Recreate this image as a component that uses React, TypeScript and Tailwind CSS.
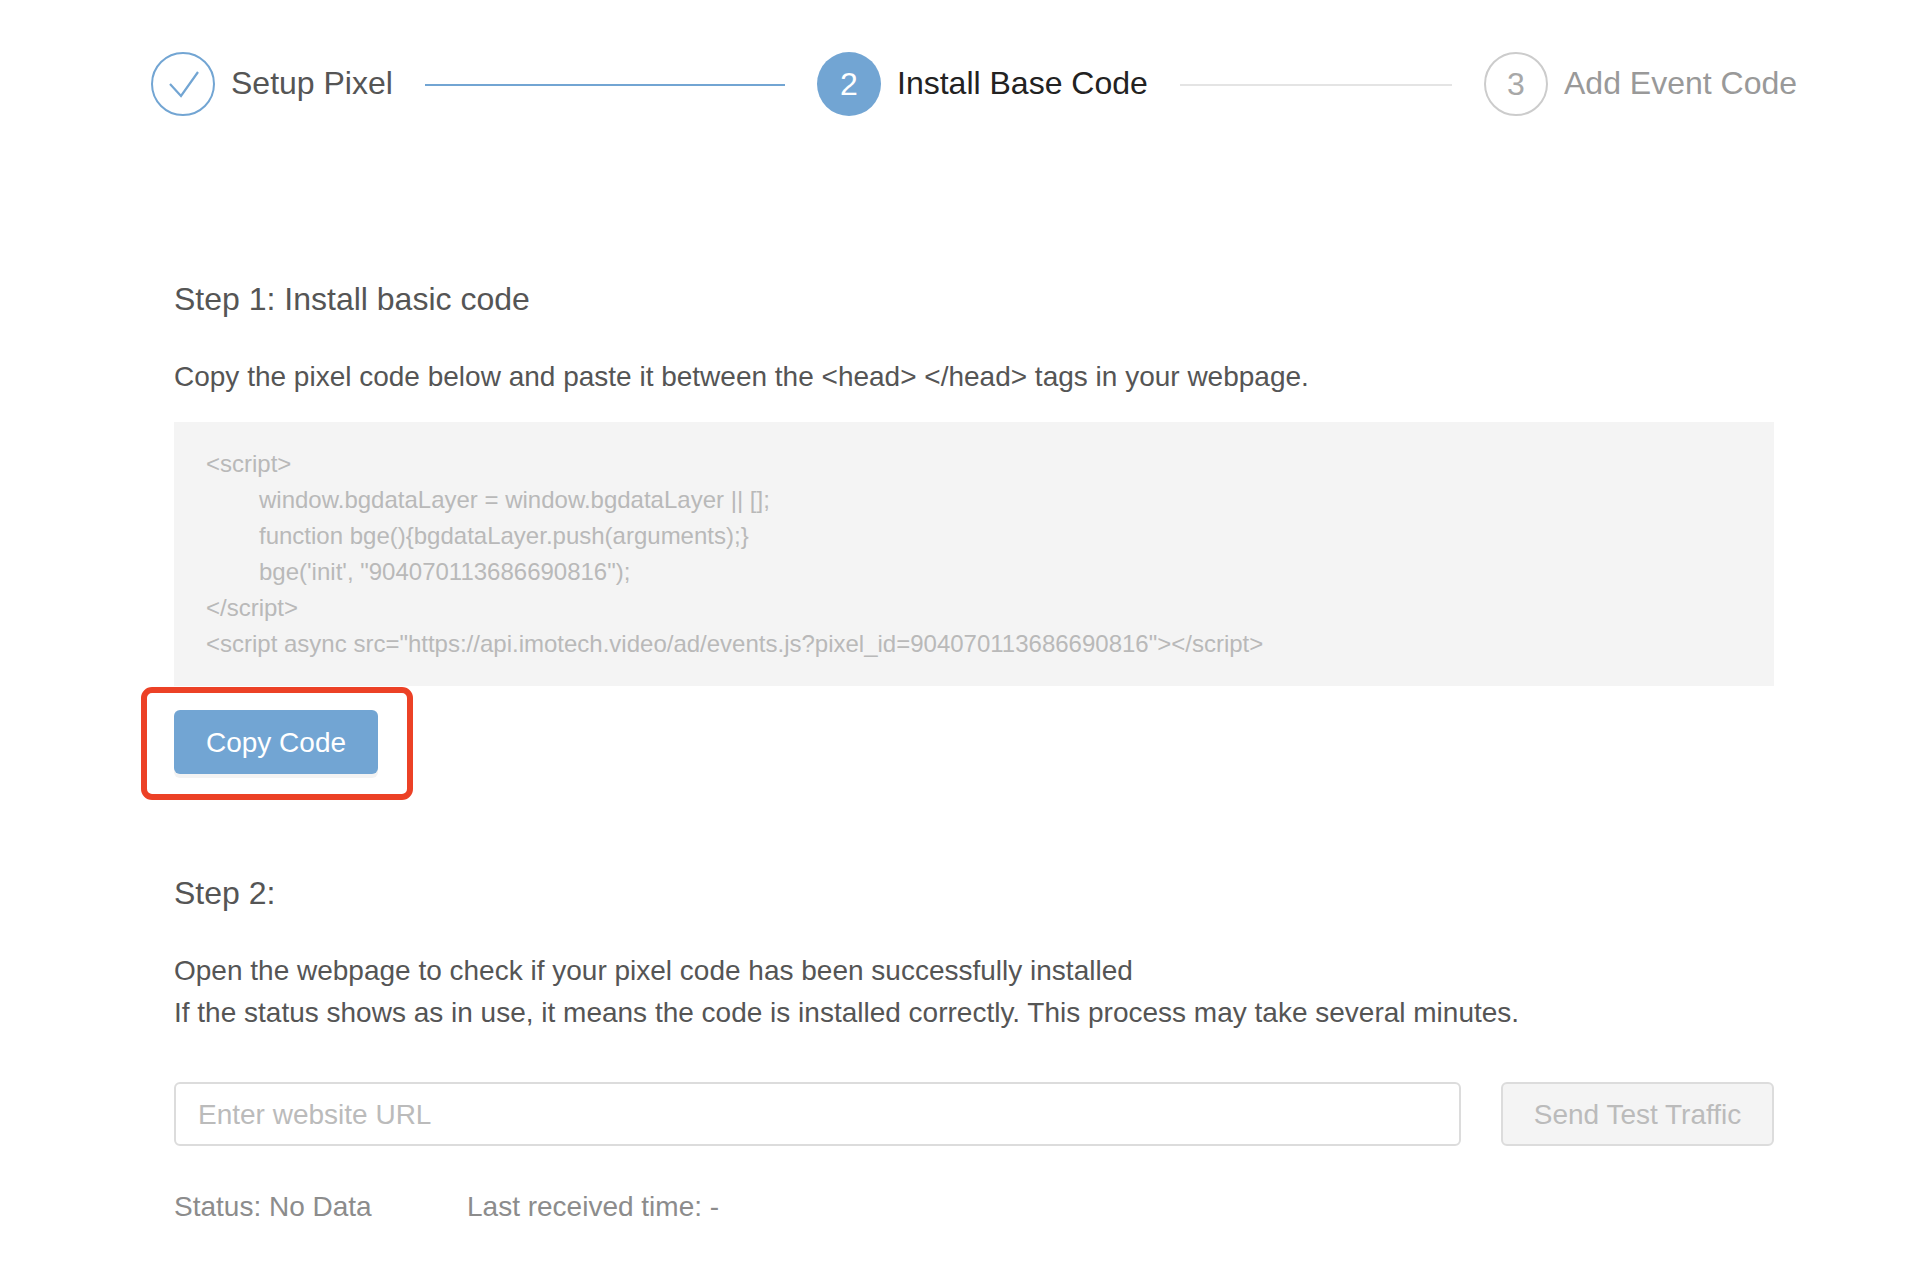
import React from 'react';

const font = "font-['Liberation_Sans',Arial,sans-serif]";

const App = () => {
  return (
    <div className={`${font} bg-white w-[1926px] h-[1288px] overflow-hidden`}>
      {/* Steps */}
      <div className="flex items-center h-[64px] mt-[52px] pl-[151px]">
        <div className="w-[64px] h-[64px] rounded-full border-2 border-[#72a5d3] flex items-center justify-center shrink-0">
          <svg width="34" height="28" viewBox="0 0 34 28" fill="none" stroke="#72a5d3" strokeWidth="2.2">
            <path d="M4 14 L15 26 L32 2" />
          </svg>
        </div>
        <span className="ml-[16px] text-[32px] leading-[36px] mb-[2px] text-[#555555] w-[194px] whitespace-nowrap">Setup Pixel</span>
        <div className="w-[360px] h-[2px] mt-[2px] bg-[#72a5d3]" />
        <div className="ml-[32px] w-[64px] h-[64px] rounded-full bg-[#72a5d3] text-white text-[32px] flex items-center justify-center shrink-0">2</div>
        <span className="ml-[16px] text-[32px] leading-[36px] mb-[2px] text-[#222222] w-[283px] whitespace-nowrap">Install Base Code</span>
        <div className="w-[272px] h-[2px] mt-[2px] bg-[#e4e4e4]" />
        <div className="ml-[32px] w-[64px] h-[64px] rounded-full border-2 border-[#cccccc] text-[#a8a8a8] text-[32px] flex items-center justify-center shrink-0">3</div>
        <span className="ml-[16px] text-[32px] leading-[36px] mb-[2px] text-[#999999] whitespace-nowrap">Add Event Code</span>
      </div>

      <div className="mx-[174px] w-[1600px] mt-[163px]">
        <h2 className="text-[32px] leading-[40px] text-[#555555]">Step 1: Install basic code</h2>
        <p className="mt-[37px] text-[28px] leading-[42px] text-[#555555]">
          Copy the pixel code below and paste it between the &lt;head&gt; &lt;/head&gt; tags in your webpage.
        </p>

        <div className="mt-[24px] h-[264px] bg-[#f4f4f4] px-[32px] py-[24px] text-[24px] leading-[36px] text-[#b9b9b9] whitespace-nowrap">
          <div>&lt;script&gt;</div>
          <div className="pl-[53px]">window.bgdataLayer = window.bgdataLayer || [];</div>
          <div className="pl-[53px]">{'function bge(){bgdataLayer.push(arguments);}'}</div>
          <div className="pl-[53px]">bge('init', "904070113686690816");</div>
          <div>&lt;/script&gt;</div>
          <div>&lt;script async src="https://api.imotech.video/ad/events.js?pixel_id=904070113686690816"&gt;&lt;/script&gt;</div>
        </div>

        <div className="relative mt-[24px] w-[204px]">
          <button className="w-[204px] h-[64px] pt-[2px] rounded-[6px] bg-[#72a5d3] text-white text-[28px] shadow-[0_4px_0_#f3f3f3]">Copy Code</button>
          {/* red annotation box */}
          <div className="absolute left-[-33px] top-[-23px] w-[272px] h-[113px] rounded-[11px] border-[6px] border-[#ec4126]" />
        </div>

        <h2 className="mt-[99px] text-[32px] leading-[40px] text-[#555555]">Step 2:</h2>
        <p className="mt-[37px] text-[28px] leading-[42px] text-[#555555]">
          Open the webpage to check if your pixel code has been successfully installed
          <br />
          If the status shows as in use, it means the code is installed correctly. This process may take several minutes.
        </p>

        <div className="mt-[48px] flex justify-between">
          <input
            placeholder="Enter website URL"
            className="w-[1287px] h-[64px] pt-[2px] rounded-[6px] border-2 border-[#dcdcdc] px-[22px] text-[28px] outline-none placeholder:text-[#bbbbbb]"
          />
          <button className="w-[273px] h-[64px] pt-[2px] rounded-[6px] border-2 border-[#dcdcdc] bg-[#f4f4f4] text-[#bbbbbb] text-[28px]">Send Test Traffic</button>
        </div>

        <div className="mt-[40px] flex text-[28px] leading-[42px] text-[#8c8c8c]">
          <span className="w-[293px]">Status: No Data</span>
          <span>Last received time: -</span>
        </div>
      </div>
    </div>
  );
};

export default App;
